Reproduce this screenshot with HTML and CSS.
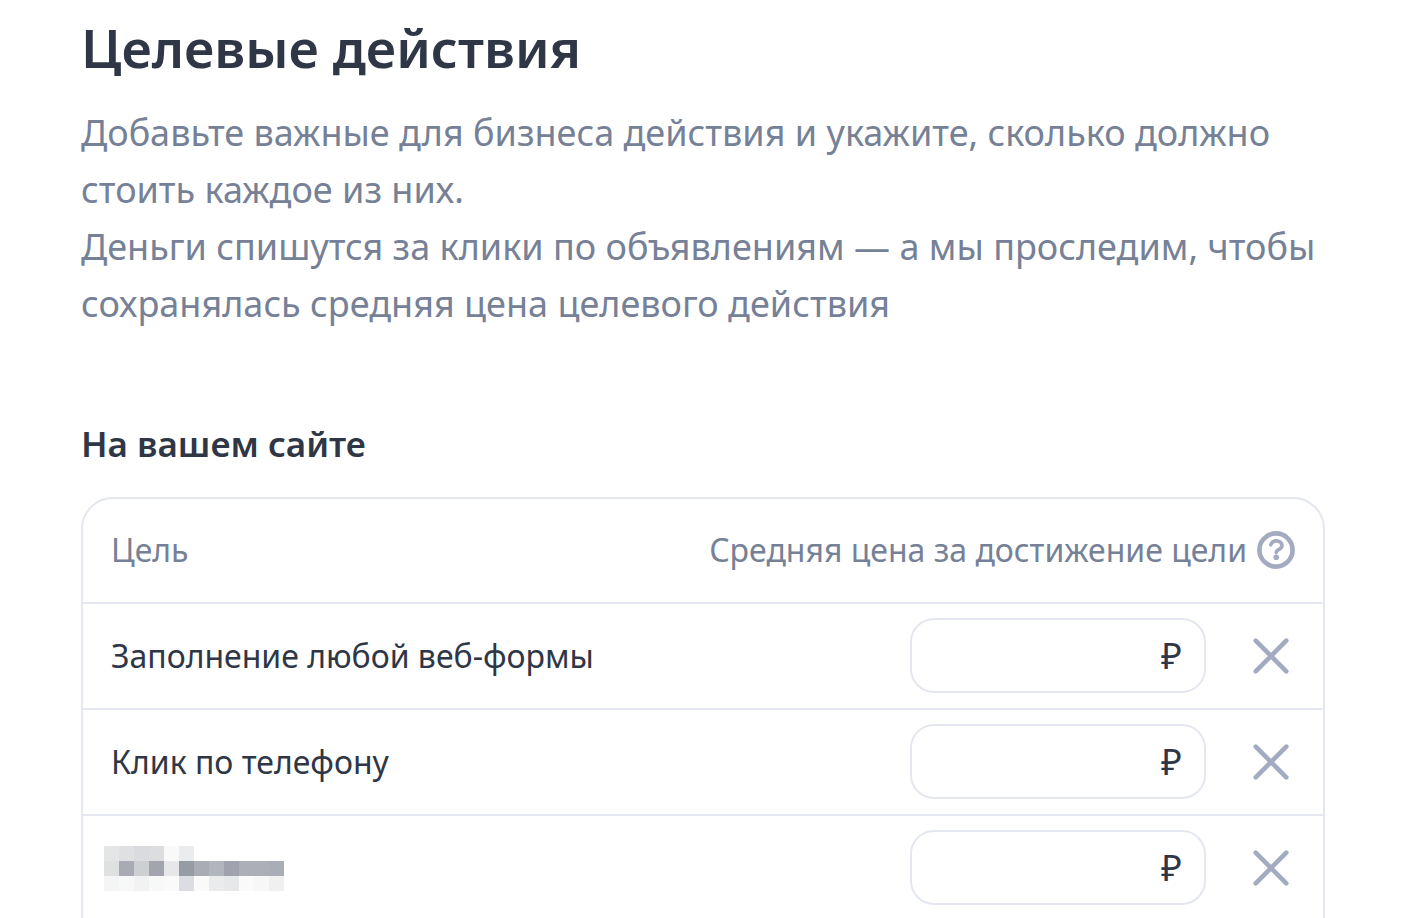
FILE: index.html
```html
<!DOCTYPE html>
<html lang="ru">
<head>
    <meta charset="UTF-8">
    <meta name="viewport" content="width=device-width, initial-scale=1.0">
    <title>Целевые действия</title>
    <link rel="stylesheet" href="styles.css">
</head>
<body>
    <main class="page">
        <h1>Целевые действия</h1>
        <p class="intro">Добавьте важные для бизнеса действия и укажите, сколько должно стоить каждое из них.<br>Деньги спишутся за клики по объявлениям — а мы проследим, чтобы сохранялась средняя цена целевого действия</p>

        <h2>На вашем сайте</h2>
        <div class="goals">
            <table>
                <thead>
                    <tr>
                        <th class="name">Цель</th>
                        <th class="price-title" colspan="2">
                            <div class="price-head">
                                <span>Средняя цена за достижение цели</span>
                                <button class="help-btn" type="button" aria-label="Справка">
                                    <svg width="38" height="38" viewBox="0 0 38 38" fill="none" stroke="currentColor">
                                        <circle cx="19" cy="19" r="16.6" stroke-width="4.6"/>
                                        <path d="M13.8 13.8C14.5 11.2 16.6 9.9 19.3 9.9C22.6 9.9 25 11.8 25 14.7C25 18.6 19.2 18.2 19.2 21.6" stroke-width="3.6" stroke-linecap="round"/>
                                        <circle cx="19.2" cy="26.3" r="2.8" fill="currentColor" stroke="none"/>
                                    </svg>
                                </button>
                            </div>
                        </th>
                    </tr>
                </thead>
                <tbody>
                    <tr>
                        <td class="name">Заполнение любой веб-формы</td>
                        <td class="price">
                            <label class="field">
                                <input type="text" inputmode="numeric" aria-label="Цена, ₽">
                                <span>₽</span>
                            </label>
                        </td>
                        <td class="remove">
                            <button class="remove-btn" type="button" aria-label="Удалить">
                                <svg width="36" height="36" viewBox="0 0 36 36" fill="none" stroke="currentColor" stroke-width="4.6" stroke-linecap="round">
                                    <path d="M2.7 2.7L33.3 33.3M33.3 2.7L2.7 33.3"/>
                                </svg>
                            </button>
                        </td>
                    </tr>
                    <tr>
                        <td class="name">Клик по телефону</td>
                        <td class="price">
                            <label class="field">
                                <input type="text" inputmode="numeric" aria-label="Цена, ₽">
                                <span>₽</span>
                            </label>
                        </td>
                        <td class="remove">
                            <button class="remove-btn" type="button" aria-label="Удалить">
                                <svg width="36" height="36" viewBox="0 0 36 36" fill="none" stroke="currentColor" stroke-width="4.6" stroke-linecap="round">
                                    <path d="M2.7 2.7L33.3 33.3M33.3 2.7L2.7 33.3"/>
                                </svg>
                            </button>
                        </td>
                    </tr>
                    <tr>
                        <td class="name masked">
                            <!-- hidden goal name, 15px mosaic -->
                            <svg width="180" height="45" viewBox="0 0 12 3" shape-rendering="crispEdges">
                                <rect x="0" y="0" width="1" height="1" fill="#e4e5e7"/>
                                <rect x="1" y="0" width="1" height="1" fill="#dfe0e2"/>
                                <rect x="2" y="0" width="1" height="1" fill="#d9dbdf"/>
                                <rect x="3" y="0" width="1" height="1" fill="#dcddde"/>
                                <rect x="4" y="0" width="1" height="1" fill="#f9f9f9"/>
                                <rect x="5" y="0" width="1" height="1" fill="#ebecee"/>
                                <rect x="0" y="1" width="1" height="1" fill="#dfe0e1"/>
                                <rect x="1" y="1" width="1" height="1" fill="#a8abb4"/>
                                <rect x="2" y="1" width="1" height="1" fill="#cecfd2"/>
                                <rect x="3" y="1" width="1" height="1" fill="#a2a5ad"/>
                                <rect x="4" y="1" width="1" height="1" fill="#e7e7e9"/>
                                <rect x="5" y="1" width="1" height="1" fill="#979ba4"/>
                                <rect x="6" y="1" width="1" height="1" fill="#a9acb5"/>
                                <rect x="7" y="1" width="1" height="1" fill="#b2b5be"/>
                                <rect x="8" y="1" width="1" height="1" fill="#a0a3ad"/>
                                <rect x="9" y="1" width="2" height="1" fill="#acafb8"/>
                                <rect x="11" y="1" width="1" height="1" fill="#a9adb6"/>
                                <rect x="0" y="2" width="1" height="1" fill="#f5f5f5"/>
                                <rect x="1" y="2" width="1" height="1" fill="#f7f9f9"/>
                                <rect x="2" y="2" width="1" height="1" fill="#f2f2f2"/>
                                <rect x="3" y="2" width="1" height="1" fill="#f7f9f9"/>
                                <rect x="4" y="2" width="1" height="1" fill="#fafafa"/>
                                <rect x="5" y="2" width="1" height="1" fill="#dcdde2"/>
                                <rect x="6" y="2" width="1" height="1" fill="#fafafa"/>
                                <rect x="7" y="2" width="1" height="1" fill="#e9ebec"/>
                                <rect x="8" y="2" width="1" height="1" fill="#e6e8e9"/>
                                <rect x="9" y="2" width="1" height="1" fill="#fafafa"/>
                                <rect x="10" y="2" width="1" height="1" fill="#f7f7f7"/>
                                <rect x="11" y="2" width="1" height="1" fill="#f0f0f0"/>
                            </svg>
                        </td>
                        <td class="price">
                            <label class="field">
                                <input type="text" inputmode="numeric" aria-label="Цена, ₽">
                                <span>₽</span>
                            </label>
                        </td>
                        <td class="remove">
                            <button class="remove-btn" type="button" aria-label="Удалить">
                                <svg width="36" height="36" viewBox="0 0 36 36" fill="none" stroke="currentColor" stroke-width="4.6" stroke-linecap="round">
                                    <path d="M2.7 2.7L33.3 33.3M33.3 2.7L2.7 33.3"/>
                                </svg>
                            </button>
                        </td>
                    </tr>
                </tbody>
            </table>
        </div>
    </main>
</body>
</html>
```
FILE: styles.css
```css
* {
    box-sizing: border-box;
}

body {
    margin: 0;
    height: 100vh;
    overflow: hidden;
    background: #fff;
    color: #2f3747;
    font-family: "Noto Sans", sans-serif;
    font-size: 32px;
}

.page {
    padding: 12px 80px 0 81px;
}

h1 {
    margin: 0 0 20px;
    font-size: 53px;
    font-weight: 600;
    line-height: 72px;
}

.intro {
    margin: 0 0 88px;
    color: #768197;
    font-size: 36px;
    line-height: 57px;
}

h2 {
    margin: 0 0 29px;
    font-size: 35px;
    font-weight: 600;
    line-height: 48px;
}

.goals {
    padding-bottom: 32px;
    border: 2px solid #e4e7ef;
    border-radius: 32px;
}

table {
    width: 100%;
    border-spacing: 0;
}

th {
    height: 103px;
    padding: 0;
    color: #768197;
    font-weight: 400;
    text-align: left;
}

td {
    height: 106px;
    padding: 0;
    border-top: 2px solid #e4e7ef;
}

.name {
    padding: 0 0 2px 28px;
}

.masked {
    padding: 0 0 0 21px;
}

.masked svg {
    display: block;
}

.price-title {
    padding: 0 28px 2px 0;
}

.price-head {
    display: flex;
    align-items: center;
    justify-content: flex-end;
    gap: 10px;
}

.price {
    padding-bottom: 2px;
}

.field {
    display: flex;
    align-items: center;
    width: 296px;
    height: 75px;
    margin-left: auto;
    padding: 0 22px;
    border: 2px solid #e4e7ef;
    border-radius: 24px;
    font-size: 36px;
}

.field input {
    flex: 1;
    min-width: 0;
    padding: 0;
    border: none;
    outline: none;
    background: none;
    color: inherit;
    font: inherit;
    text-align: right;
}

.remove {
    width: 117px;
    padding-right: 34px;
}

.help-btn,
.remove-btn {
    display: block;
    padding: 0;
    border: none;
    background: none;
    color: #a2abbf;
    cursor: pointer;
}

.remove-btn {
    margin-left: auto;
}

.help-btn svg,
.remove-btn svg {
    display: block;
}
```
